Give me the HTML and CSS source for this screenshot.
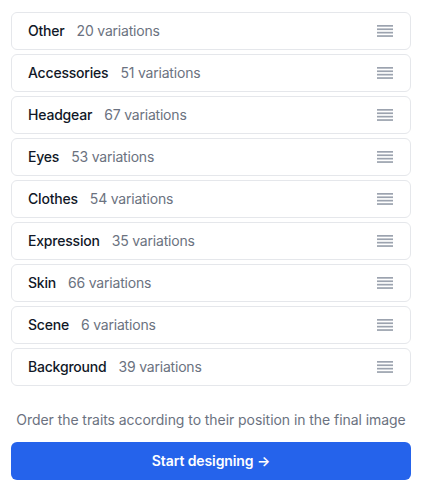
FILE: index.html
```html
<!DOCTYPE html>
<html>
<head>
<meta charset="utf-8">
<link rel="stylesheet" href="styles.css">
</head>
<body>
<div class="wrap">
  <ul class="list">
    <li class="row"><span class="name">Other</span><span class="count">20 variations</span><svg class="handle" viewBox="0 0 16 12"><rect y="0" width="16" height="1.7"/><rect y="3.4" width="16" height="1.7"/><rect y="6.8" width="16" height="1.7"/><rect y="10.2" width="16" height="1.7"/></svg></li>
    <li class="row"><span class="name">Accessories</span><span class="count">51 variations</span><svg class="handle" viewBox="0 0 16 12"><rect y="0" width="16" height="1.7"/><rect y="3.4" width="16" height="1.7"/><rect y="6.8" width="16" height="1.7"/><rect y="10.2" width="16" height="1.7"/></svg></li>
    <li class="row"><span class="name">Headgear</span><span class="count">67 variations</span><svg class="handle" viewBox="0 0 16 12"><rect y="0" width="16" height="1.7"/><rect y="3.4" width="16" height="1.7"/><rect y="6.8" width="16" height="1.7"/><rect y="10.2" width="16" height="1.7"/></svg></li>
    <li class="row"><span class="name">Eyes</span><span class="count">53 variations</span><svg class="handle" viewBox="0 0 16 12"><rect y="0" width="16" height="1.7"/><rect y="3.4" width="16" height="1.7"/><rect y="6.8" width="16" height="1.7"/><rect y="10.2" width="16" height="1.7"/></svg></li>
    <li class="row"><span class="name">Clothes</span><span class="count">54 variations</span><svg class="handle" viewBox="0 0 16 12"><rect y="0" width="16" height="1.7"/><rect y="3.4" width="16" height="1.7"/><rect y="6.8" width="16" height="1.7"/><rect y="10.2" width="16" height="1.7"/></svg></li>
    <li class="row"><span class="name">Expression</span><span class="count">35 variations</span><svg class="handle" viewBox="0 0 16 12"><rect y="0" width="16" height="1.7"/><rect y="3.4" width="16" height="1.7"/><rect y="6.8" width="16" height="1.7"/><rect y="10.2" width="16" height="1.7"/></svg></li>
    <li class="row"><span class="name">Skin</span><span class="count">66 variations</span><svg class="handle" viewBox="0 0 16 12"><rect y="0" width="16" height="1.7"/><rect y="3.4" width="16" height="1.7"/><rect y="6.8" width="16" height="1.7"/><rect y="10.2" width="16" height="1.7"/></svg></li>
    <li class="row"><span class="name">Scene</span><span class="count">6 variations</span><svg class="handle" viewBox="0 0 16 12"><rect y="0" width="16" height="1.7"/><rect y="3.4" width="16" height="1.7"/><rect y="6.8" width="16" height="1.7"/><rect y="10.2" width="16" height="1.7"/></svg></li>
    <li class="row"><span class="name">Background</span><span class="count">39 variations</span><svg class="handle" viewBox="0 0 16 12"><rect y="0" width="16" height="1.7"/><rect y="3.4" width="16" height="1.7"/><rect y="6.8" width="16" height="1.7"/><rect y="10.2" width="16" height="1.7"/></svg></li>
  </ul>
  <p class="hint">Order the traits according to their position in the final image</p>
  <button class="btn">Start designing →</button>
</div>
</body>
</html>
```
FILE: styles.css
```css
* { box-sizing: border-box; }
body {
  margin: 0;
  background: #ffffff;
  font-family: Inter, "Noto Sans", sans-serif;
  font-size: 14px;
  line-height: 20px;
  -webkit-font-smoothing: antialiased;
}
.wrap {
  width: 400px;
  margin-left: 11px;
  padding-top: 12px;
}
.list {
  list-style: none;
  margin: 0;
  padding: 0;
  display: flex;
  flex-direction: column;
  gap: 4px;
}
.row {
  height: 38px;
  display: flex;
  align-items: center;
  padding: 0 17px 0 16px;
  border: 1px solid #e5e7eb;
  border-radius: 6px;
  background: #fff;
  letter-spacing: -0.2px;
}
.name {
  font-weight: 500;
  color: #111827;
}
.count {
  margin-left: 12px;
  color: #6b7280;
}
.handle {
  margin-left: auto;
  width: 16px;
  height: 12px;
  fill: #9ca3af;
}
.hint {
  margin: 24px 0 12px;
  text-align: center;
  color: #6b7280;
  letter-spacing: -0.06px;
}
.btn {
  display: block;
  width: 100%;
  height: 38px;
  border: none;
  border-radius: 6px;
  background: #2563eb;
  color: #fff;
  font-family: Inter, "Noto Sans", sans-serif;
  font-size: 14px;
  font-weight: 600;
  line-height: 20px;
  letter-spacing: -0.1px;
  cursor: pointer;
}
```
